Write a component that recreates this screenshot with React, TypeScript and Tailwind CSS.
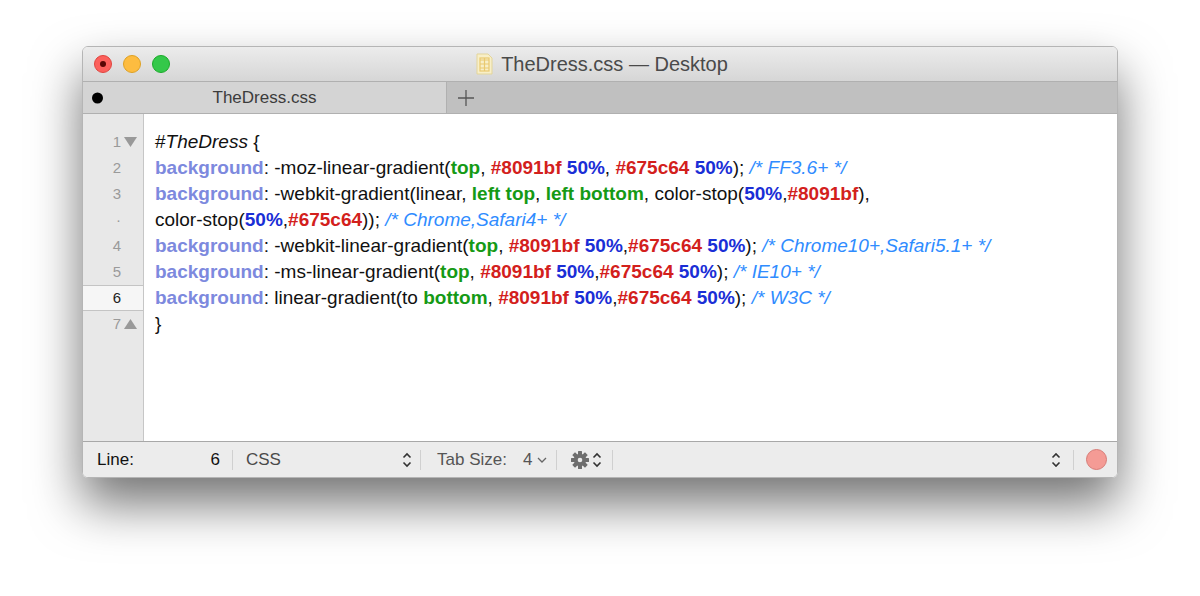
import React from "react";

type Tok = [string, string];

const P = "text-[#7d89de] font-bold";
const G = "text-[#159a15] font-bold";
const R = "text-[#d3201c] font-bold";
const B = "text-[#1a2ed6] font-bold";
const C = "text-[#2f8cff] italic";
const N = "text-[#111]";

const lines: { num: string; mark?: "down" | "up"; current?: boolean; toks: Tok[] }[] = [
  { num: "1", mark: "down", toks: [[N, "#"], ["text-[#111] italic", "TheDress"], [N, " {"]] },
  {
    num: "2",
    toks: [
      [P, "background"], [N, ": -moz-linear-gradient("], [G, "top"], [N, ", "], [R, "#8091bf"], [N, " "], [B, "50%"],
      [N, ", "], [R, "#675c64"], [N, " "], [B, "50%"], [N, "); "], [C, "/* FF3.6+ */"],
    ],
  },
  {
    num: "3",
    toks: [
      [P, "background"], [N, ": -webkit-gradient(linear, "], [G, "left top"], [N, ", "], [G, "left bottom"],
      [N, ", color-stop("], [B, "50%"], [N, ","], [R, "#8091bf"], [N, "),"],
    ],
  },
  { num: "·", toks: [[N, "color-stop("], [B, "50%"], [N, ","], [R, "#675c64"], [N, ")); "], [C, "/* Chrome,Safari4+ */"]] },
  {
    num: "4",
    toks: [
      [P, "background"], [N, ": -webkit-linear-gradient("], [G, "top"], [N, ", "], [R, "#8091bf"], [N, " "], [B, "50%"],
      [N, ","], [R, "#675c64"], [N, " "], [B, "50%"], [N, "); "], [C, "/* Chrome10+,Safari5.1+ */"],
    ],
  },
  {
    num: "5",
    toks: [
      [P, "background"], [N, ": -ms-linear-gradient("], [G, "top"], [N, ", "], [R, "#8091bf"], [N, " "], [B, "50%"],
      [N, ","], [R, "#675c64"], [N, " "], [B, "50%"], [N, "); "], [C, "/* IE10+ */"],
    ],
  },
  {
    num: "6",
    current: true,
    toks: [
      [P, "background"], [N, ": linear-gradient(to "], [G, "bottom"], [N, ", "], [R, "#8091bf"], [N, " "], [B, "50%"],
      [N, ","], [R, "#675c64"], [N, " "], [B, "50%"], [N, "); "], [C, "/* W3C */"],
    ],
  },
  { num: "7", mark: "up", toks: [[N, "}"]] },
];

function UpDown() {
  return (
    <svg width="10" height="18" viewBox="0 0 10 18" className="text-[#333]">
      <path d="M1.5 6.5 L5 3 L8.5 6.5 M1.5 11.5 L5 15 L8.5 11.5" fill="none" stroke="currentColor" strokeWidth="1.6" />
    </svg>
  );
}

function Sep() {
  return <div className="h-[20px] w-px shrink-0 bg-[#d0d0d0]" />;
}

function Gear() {
  const teeth = Array.from({ length: 8 }, (_, i) => i * 45);
  return (
    <svg width="20" height="20" viewBox="0 0 20 20">
      <g fill="#6e6e6e">
        {teeth.map((a) => (
          <rect key={a} x="8" y="1" width="4" height="5" rx="0.5" transform={`rotate(${a} 10 10)`} />
        ))}
        <circle cx="10" cy="10" r="6.2" />
      </g>
      <circle cx="10" cy="10" r="2.3" fill="#ececec" />
    </svg>
  );
}

export default function App() {
  return (
    <div className="h-[596px] w-[1200px] overflow-hidden bg-white pl-[82px] pt-[46px] font-['Liberation_Sans',Arial,sans-serif]">
      <div className="flex h-[432px] w-[1036px] flex-col overflow-hidden rounded-[6px] border border-[#b5b5b5] shadow-[0_26px_50px_rgba(0,0,0,0.55)]">
        {/* Title bar */}
        <div className="relative flex h-[34px] shrink-0 items-center bg-gradient-to-b from-[#ececec] to-[#d6d6d6]">
          <div className="flex items-center gap-[11px] pl-[11px]">
            <div className="flex h-[18px] w-[18px] items-center justify-center rounded-full border border-[#e0443e] bg-[#fc605c]">
              <div className="h-[6px] w-[6px] rounded-full bg-[#5a0705]" />
            </div>
            <div className="h-[18px] w-[18px] rounded-full border border-[#dea123] bg-[#fdbc40]" />
            <div className="h-[18px] w-[18px] rounded-full border border-[#1aab29] bg-[#34c84a]" />
          </div>
          <div className="absolute inset-0 flex items-center justify-center gap-[8px] pl-[4px]">
            <svg width="17" height="22" viewBox="0 0 17 22">
              <path d="M1 1 H12 L16 5 V21 H1 Z" fill="#f8efc8" stroke="#e3d59a" />
              <path d="M4 7 H13 M4 11 H13 M4 15 H13 M8.5 5 V18" stroke="#e9c970" strokeWidth="1.2" />
              <rect x="4" y="5" width="9" height="13" fill="none" stroke="#e9c970" strokeWidth="1.2" />
            </svg>
            <span className="text-[20px] text-[#4a4a4a]">TheDress.css — Desktop</span>
          </div>
        </div>

        {/* Tab bar */}
        <div className="flex h-[33px] shrink-0 border-y border-[#b0b0b0] bg-[#c0c0c0]">
          <div className="relative flex w-[364px] items-center justify-center border-r border-[#b0b0b0] bg-[#d4d4d4]">
            <div className="absolute left-[9px] top-1/2 h-[11px] w-[11px] -translate-y-1/2 rounded-full bg-black" />
            <span className="text-[17px] text-[#3c3c3c]">TheDress.css</span>
          </div>
          <div className="flex items-center pl-[10px]">
            <svg width="18" height="18" viewBox="0 0 18 18">
              <path d="M9 1 V17 M1 9 H17" stroke="#555" strokeWidth="1.3" />
            </svg>
          </div>
        </div>

        {/* Editor */}
        <div className="flex min-h-0 flex-1 bg-white">
          <div className="w-[61px] shrink-0 border-r border-[#c6c6c6] bg-[#e8e8e8] pt-[15px]">
            {lines.map((l, i) => (
              <div
                key={i}
                className={
                  "flex h-[26px] items-center justify-end pr-[6px] text-[15px] " +
                  (l.current ? "border-y border-[#c4c4c4] bg-[#f6f6f6] text-[#222]" : "text-[#9a9a9a]")
                }
              >
                <span className={l.current ? "pr-[16px]" : ""}>{l.num}</span>
                {l.mark === "down" && (
                  <svg width="13" height="10" viewBox="0 0 13 10" className="ml-[3px]">
                    <path d="M0 0 H13 L6.5 10 Z" fill="#999" />
                  </svg>
                )}
                {l.mark === "up" && (
                  <svg width="13" height="10" viewBox="0 0 13 10" className="ml-[3px]">
                    <path d="M0 10 H13 L6.5 0 Z" fill="#999" />
                  </svg>
                )}
                {!l.mark && !l.current && <span className="w-[16px]" />}
              </div>
            ))}
          </div>
          <div className="flex-1 pl-[11px] pt-[15px]">
            {lines.map((l, i) => (
              <div key={i} className="flex h-[26px] items-center whitespace-pre text-[19px]">
                {l.toks.map(([cls, t], j) => (
                  <span key={j} className={cls}>
                    {t}
                  </span>
                ))}
              </div>
            ))}
          </div>
        </div>

        {/* Status bar */}
        <div className="flex h-[36px] shrink-0 items-center border-t border-[#a8a8a8] bg-[#ececec] text-[17px]">
          <div className="flex w-[149px] justify-between pl-[14px] pr-[12px] text-[#111]">
            <span>Line:</span>
            <span>6</span>
          </div>
          <Sep />
          <span className="w-[169px] pl-[13px] text-[#4a4a4a]">CSS</span>
          <div className="mr-[8px]">
            <UpDown />
          </div>
          <Sep />
          <span className="pl-[16px] text-[#555]">Tab Size:</span>
          <span className="pl-[16px] text-[#555]">4</span>
          <svg width="10" height="8" viewBox="0 0 10 8" className="ml-[5px]">
            <path d="M1 2 L5 6 L9 2" fill="none" stroke="#666" strokeWidth="1.3" />
          </svg>
          <div className="ml-[9px]">
            <Sep />
          </div>
          <div className="ml-[13px]">
            <Gear />
          </div>
          <div className="ml-[2px] mr-[10px]">
            <UpDown />
          </div>
          <Sep />
          <div className="ml-auto mr-[12px]">
            <UpDown />
          </div>
          <Sep />
          <div className="ml-[12px] mr-[10px] h-[21px] w-[21px] rounded-full border border-[#d77b76] bg-[#f49b95]" />
        </div>
      </div>
    </div>
  );
}
